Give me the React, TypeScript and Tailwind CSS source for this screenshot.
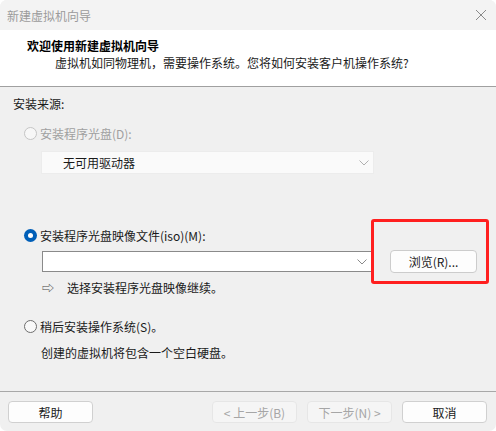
function Radio({ state }: { state: "off" | "on" | "disabled" }) {
  if (state === "on") {
    return (
      <span className="flex h-[13px] w-[13px] items-center justify-center rounded-full bg-[#005fb8]">
        <span className="h-[5px] w-[5px] rounded-full bg-white" />
      </span>
    );
  }
  return (
    <span
      className={
        state === "disabled"
          ? "h-[13px] w-[13px] rounded-full border border-[#c5c5c5] bg-[#f7f7f7]"
          : "h-[13px] w-[13px] rounded-full border border-[#6e6e6e] bg-[#f9f9f9]"
      }
    />
  );
}

function Chevron({ color }: { color: string }) {
  return (
    <svg width="10" height="6" viewBox="0 0 10 6" fill="none">
      <path d="M0.5 0.5 L5 5 L9.5 0.5" stroke={color} strokeWidth="1" />
    </svg>
  );
}

function Btn({ label, disabled }: { label: string; disabled?: boolean }) {
  return (
    <div
      className={
        disabled
          ? "flex h-[22px] w-[85px] items-center justify-center rounded-[4px] border border-[#e6e6e6] bg-[#f5f5f5] text-[#a6a6a6]"
          : "flex h-[22px] w-[85px] items-center justify-center rounded-[4px] border border-[#d0d0d0] bg-[#fdfdfd] text-[#1a1a1a]"
      }
    >
      {label}
    </div>
  );
}

export default function App() {
  return (
    <div
      className="flex h-[431px] w-[496px] flex-col overflow-hidden rounded-[7px] bg-[#f0f0f0] text-[12px] leading-[17px] text-[#1a1a1a]"
      style={{ fontFamily: '"Noto Sans CJK SC", "Noto Sans", sans-serif' }}
    >
      <div className="flex h-[30px] items-center justify-between bg-[#f3f3f3] pl-[7px] pr-[9px]">
        <span className="text-[#9b9b9b]">新建虚拟机向导</span>
        <svg width="12" height="12" viewBox="0 0 12 12">
          <path d="M1 1 L11 11 M11 1 L1 11" stroke="#8a8a8a" strokeWidth="1" />
        </svg>
      </div>

      <div className="h-[57px] border-b border-[#a0a0a0] bg-white pl-[27px] pt-[7px]">
        <div className="font-bold text-black">欢迎使用新建虚拟机向导</div>
        <div className="pl-[28px]">虚拟机如同物理机，需要操作系统。您将如何安装客户机操作系统?</div>
      </div>

      <div className="flex flex-1 flex-col pl-[13px] pt-[8px]">
        <div>安装来源:</div>

        <div className="mt-[13px] flex items-center gap-[3px] pl-[11px]">
          <Radio state="disabled" />
          <span className="text-[#a0a0a0]">安装程序光盘(D):</span>
        </div>
        <div className="ml-[29px] mt-[10px] flex h-[21px] w-[331px] items-center justify-between bg-[#fafafa] pl-[21px] pr-[4px] shadow-[0_0_0_1px_#ececec]">
          <span>无可用驱动器</span>
          <Chevron color="#b0b0b0" />
        </div>

        <div className="mt-[54px] flex items-center gap-[3px] pl-[11px]">
          <Radio state="on" />
          <span>安装程序光盘映像文件(iso)(M):</span>
        </div>
        <div className="relative ml-[29px] mt-[6px] flex items-center">
          <div className="flex h-[21px] w-[330px] items-center justify-end border border-[#8a8a8a] bg-white pr-[4px]">
            <Chevron color="#8a8a8a" />
          </div>
          <div className="ml-[18px] flex h-[23px] w-[87px] items-center justify-center rounded-[4px] border border-[#cccccc] bg-[#fdfdfd]">
            浏览(R)...
          </div>
          <div className="absolute left-[329px] top-[-31px] h-[65px] w-[118px] rounded-[3px] border-[3px] border-[#ff1f1f]" />
        </div>
        <div className="ml-[29px] mt-[6px] flex items-center">
          <span className="w-[25px] text-[#444]">⇨</span>
          <span>选择安装程序光盘映像继续。</span>
        </div>

        <div className="mt-[22px] flex items-center gap-[3px] pl-[11px]">
          <Radio state="off" />
          <span>稍后安装操作系统(S)。</span>
        </div>
        <div className="ml-[28px] mt-[9px]">创建的虚拟机将包含一个空白硬盘。</div>
      </div>

      <div className="flex h-[40px] items-start border-t border-[#a8a8a8] pl-[8px] pt-[9px]">
        <Btn label="帮助" />
        <div className="ml-auto flex gap-[10px] pr-[9px]">
          <Btn label="< 上一步(B)" disabled />
          <Btn label="下一步(N) >" disabled />
          <Btn label="取消" />
        </div>
      </div>
    </div>
  );
}
